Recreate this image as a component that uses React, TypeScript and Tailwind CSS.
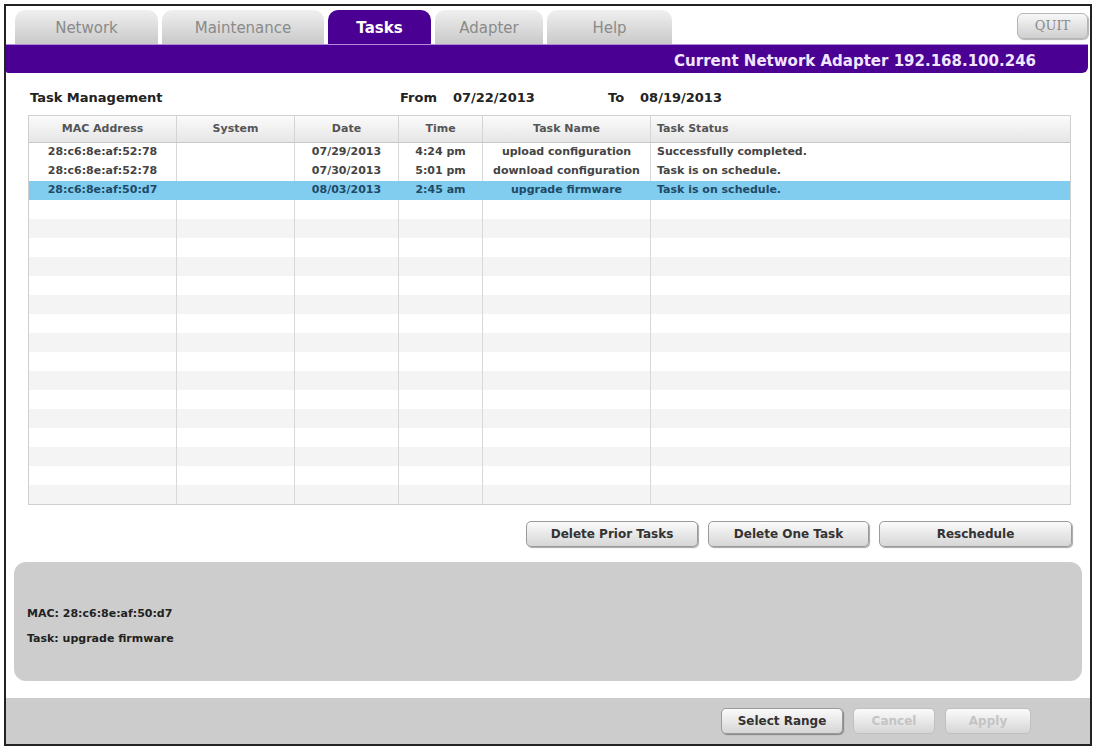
const tabs = [
  { label: "Network", w: "w-[143px]" },
  { label: "Maintenance", w: "w-[162px]" },
  { label: "Tasks", w: "w-[103px]", active: true },
  { label: "Adapter", w: "w-[108px]" },
  { label: "Help", w: "w-[125px]" },
];

const columns = [
  { label: "MAC Address", w: "w-[148px]", align: "text-center" },
  { label: "System", w: "w-[118px]", align: "text-center" },
  { label: "Date", w: "w-[104px]", align: "text-center" },
  { label: "Time", w: "w-[84px]", align: "text-center" },
  { label: "Task Name", w: "w-[168px]", align: "text-center" },
  { label: "Task Status", w: "flex-1", align: "text-left pl-[6px]" },
];

const tasks = [
  ["28:c6:8e:af:52:78", "", "07/29/2013", "4:24 pm", "upload configuration", "Successfully completed."],
  ["28:c6:8e:af:52:78", "", "07/30/2013", "5:01 pm", "download configuration", "Task is on schedule."],
  ["28:c6:8e:af:50:d7", "", "08/03/2013", "2:45 am", "upgrade firmware", "Task is on schedule."],
];

const Btn = ({ label, w, disabled }: { label: string; w: string; disabled?: boolean }) => (
  <div
    className={`${w} h-[26px] flex items-center justify-center rounded-[5px] border border-[#9a9a9a] bg-gradient-to-b from-[#fbfbfb] to-[#d6d6d6] shadow-[1px_1px_1px_rgba(0,0,0,0.35)] text-[12px] font-bold ${
      disabled ? "text-[#c4c4c4] border-[#c0c0c0] shadow-none" : "text-[#333]"
    }`}
  >
    {label}
  </div>
);

const App = () => {
  const rows = Array.from({ length: 19 }, (_, i) => tasks[i] ?? ["", "", "", "", "", ""]);

  return (
    <div className="w-[1095px] h-[748px] bg-white pt-[4px] pl-[4px] font-['DejaVu_Sans',sans-serif]">
      <div className="w-[1088px] h-[742px] border-2 border-[#222] flex flex-col bg-white">
        {/* Tabs */}
        <div className="h-[38px] flex items-end pl-[9px] pr-[2px] gap-[4px]">
          {tabs.map((t) => (
            <div
              key={t.label}
              className={`${t.w} h-[34px] pt-[3px] rounded-t-[10px] flex items-center justify-center text-[15px] ${
                t.active
                  ? "bg-[#4a0093] text-white font-bold"
                  : "bg-gradient-to-b from-[#f0f0f0] to-[#c9c9c9] text-[#8a8a8a]"
              }`}
            >
              {t.label}
            </div>
          ))}
          <div className="flex-1" />
          <div className="self-start mt-[7px] w-[71px] h-[26px] rounded-[6px] border border-[#b5b5b5] bg-gradient-to-b from-[#f8f8f8] to-[#cfcfcf] shadow-[1px_1px_1px_rgba(0,0,0,0.3)] flex items-center justify-center text-[13px] text-[#8a8a8a] font-['DejaVu_Serif',serif]">
            QUIT
          </div>
        </div>

        {/* Purple bar */}
        <div className="h-[29px] pt-[4px] mr-[2px] bg-[#4a0093] border-t border-[#b38ae0] rounded-br-[6px] rounded-bl-[2px] flex items-center justify-end pr-[52px] text-[15px] font-bold text-[#f1e6ff]">
          Current Network Adapter 192.168.100.246
        </div>

        {/* Header line */}
        <div className="h-[42px] pt-[8px] flex items-center pl-[24px] text-[13px] font-bold text-[#222]">
          <div className="w-[370px]">Task Management</div>
          <div className="w-[208px] flex gap-[16px]">
            <span>From</span>
            <span>07/22/2013</span>
          </div>
          <div className="flex gap-[16px]">
            <span>To</span>
            <span>08/19/2013</span>
          </div>
        </div>

        {/* Table */}
        <div className="ml-[22px] w-[1043px] border border-[#cfcfcf] text-[11px] font-bold">
          <div className="h-[27px] flex bg-gradient-to-b from-[#fbfbfb] to-[#e6e6e6] border-b border-[#c8c8c8] text-[#555]">
            {columns.map((c, i) => (
              <div
                key={c.label}
                className={`${c.w} ${c.align} flex items-center ${c.align.includes("left") ? "justify-start" : "justify-center"} ${
                  i < columns.length - 1 ? "border-r border-[#d4d4d4]" : ""
                }`}
              >
                {c.label}
              </div>
            ))}
          </div>
          {rows.map((r, ri) => {
            const selected = ri === 2;
            return (
              <div
                key={ri}
                className={`h-[19px] flex ${
                  selected ? "bg-[#80cdf0] text-[#1f4a66]" : ri % 2 === 0 && ri > 2 ? "bg-[#f4f4f4] text-[#444]" : "bg-white text-[#444]"
                }`}
              >
                {columns.map((c, ci) => (
                  <div
                    key={ci}
                    className={`${c.w} flex items-center whitespace-nowrap ${
                      c.align.includes("left") ? "justify-start pl-[6px]" : "justify-center"
                    } ${ci < columns.length - 1 && !selected ? "border-r border-[#d8d8d8]" : ""} ${
                      ci < columns.length - 1 && selected ? "border-r border-[#80cdf0]" : ""
                    }`}
                  >
                    {r[ci]}
                  </div>
                ))}
              </div>
            );
          })}
        </div>

        {/* Action buttons */}
        <div className="flex justify-end gap-[10px] pr-[18px] mt-[16px]">
          <Btn label="Delete Prior Tasks" w="w-[172px]" />
          <Btn label="Delete One Task" w="w-[161px]" />
          <Btn label="Reschedule" w="w-[193px]" />
        </div>

        {/* Info panel */}
        <div className="mx-[8px] mt-[15px] h-[119px] rounded-[12px] bg-[#cdcdcd] flex flex-col justify-center pl-[13px] pt-[10px] gap-[8px] text-[11px] font-bold text-[#222]">
          <div>MAC: 28:c6:8e:af:50:d7</div>
          <div>Task: upgrade firmware</div>
        </div>

        {/* Bottom bar */}
        <div className="flex-1 mt-[17px] bg-[#cccccc] flex items-center justify-end pr-[59px] gap-[10px]">
          <Btn label="Select Range" w="w-[122px]" />
          <Btn label="Cancel" w="w-[82px]" disabled />
          <Btn label="Apply" w="w-[86px]" disabled />
        </div>
      </div>
    </div>
  );
};

export default App;
